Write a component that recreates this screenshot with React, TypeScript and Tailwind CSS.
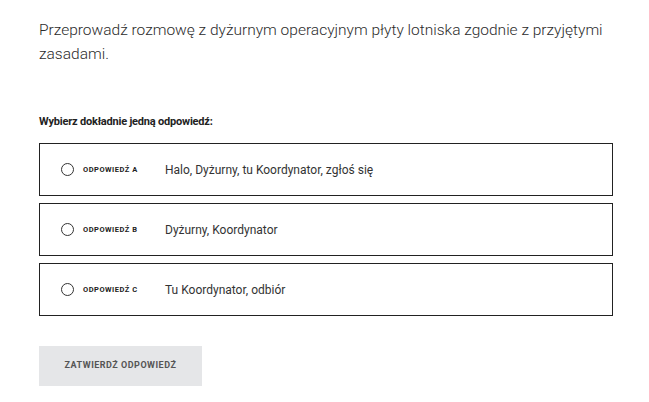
import React, { useState } from 'react';

const answers = [
  { key: 'A', text: 'Halo, Dyżurny, tu Koordynator, zgłoś się' },
  { key: 'B', text: 'Dyżurny, Koordynator' },
  { key: 'C', text: 'Tu Koordynator, odbiór' },
];

export default function App() {
  const [selected, setSelected] = useState<string | null>(null);

  return (
    <div className="min-h-screen bg-white font-['Roboto',sans-serif] text-[#333]">
      <div className="pl-[39px] pr-[36px] pt-[18px]">
        <p className="text-[15.5px] leading-[24px] font-light text-[#2b2b2b]">
          Przeprowadź rozmowę z dyżurnym operacyjnym płyty lotniska zgodnie z przyjętymi zasadami.
        </p>

        <p className="mt-[49px] text-[11px] leading-[14px] font-bold tracking-[-0.2px] text-[#222]">
          Wybierz dokładnie jedną odpowiedź:
        </p>

        <div className="mt-[14px] flex flex-col gap-[7px]">
          {answers.map((a) => (
            <label
              key={a.key}
              onClick={() => setSelected(a.key)}
              className="flex h-[53px] cursor-pointer items-center border-[1.5px] border-[#222] pl-[21px]"
            >
              <span className="flex h-[13px] w-[13px] shrink-0 items-center justify-center rounded-full border-[1.5px] border-[#333]">
                {selected === a.key && <span className="h-[6px] w-[6px] rounded-full bg-[#333]" />}
              </span>
              <span className="ml-[9px] w-[82px] shrink-0 text-[7.5px] font-bold uppercase tracking-[0.5px] text-[#222]">
                Odpowiedź {a.key}
              </span>
              <span className="text-[12px] text-[#333]">{a.text}</span>
            </label>
          ))}
        </div>

        <button className="mt-[30px] flex h-[40px] w-[163px] items-center justify-center bg-[#e5e6e8] text-[9px] font-bold uppercase tracking-[0.5px] text-[#555]">
          Zatwierdź odpowiedź
        </button>
      </div>
    </div>
  );
}
